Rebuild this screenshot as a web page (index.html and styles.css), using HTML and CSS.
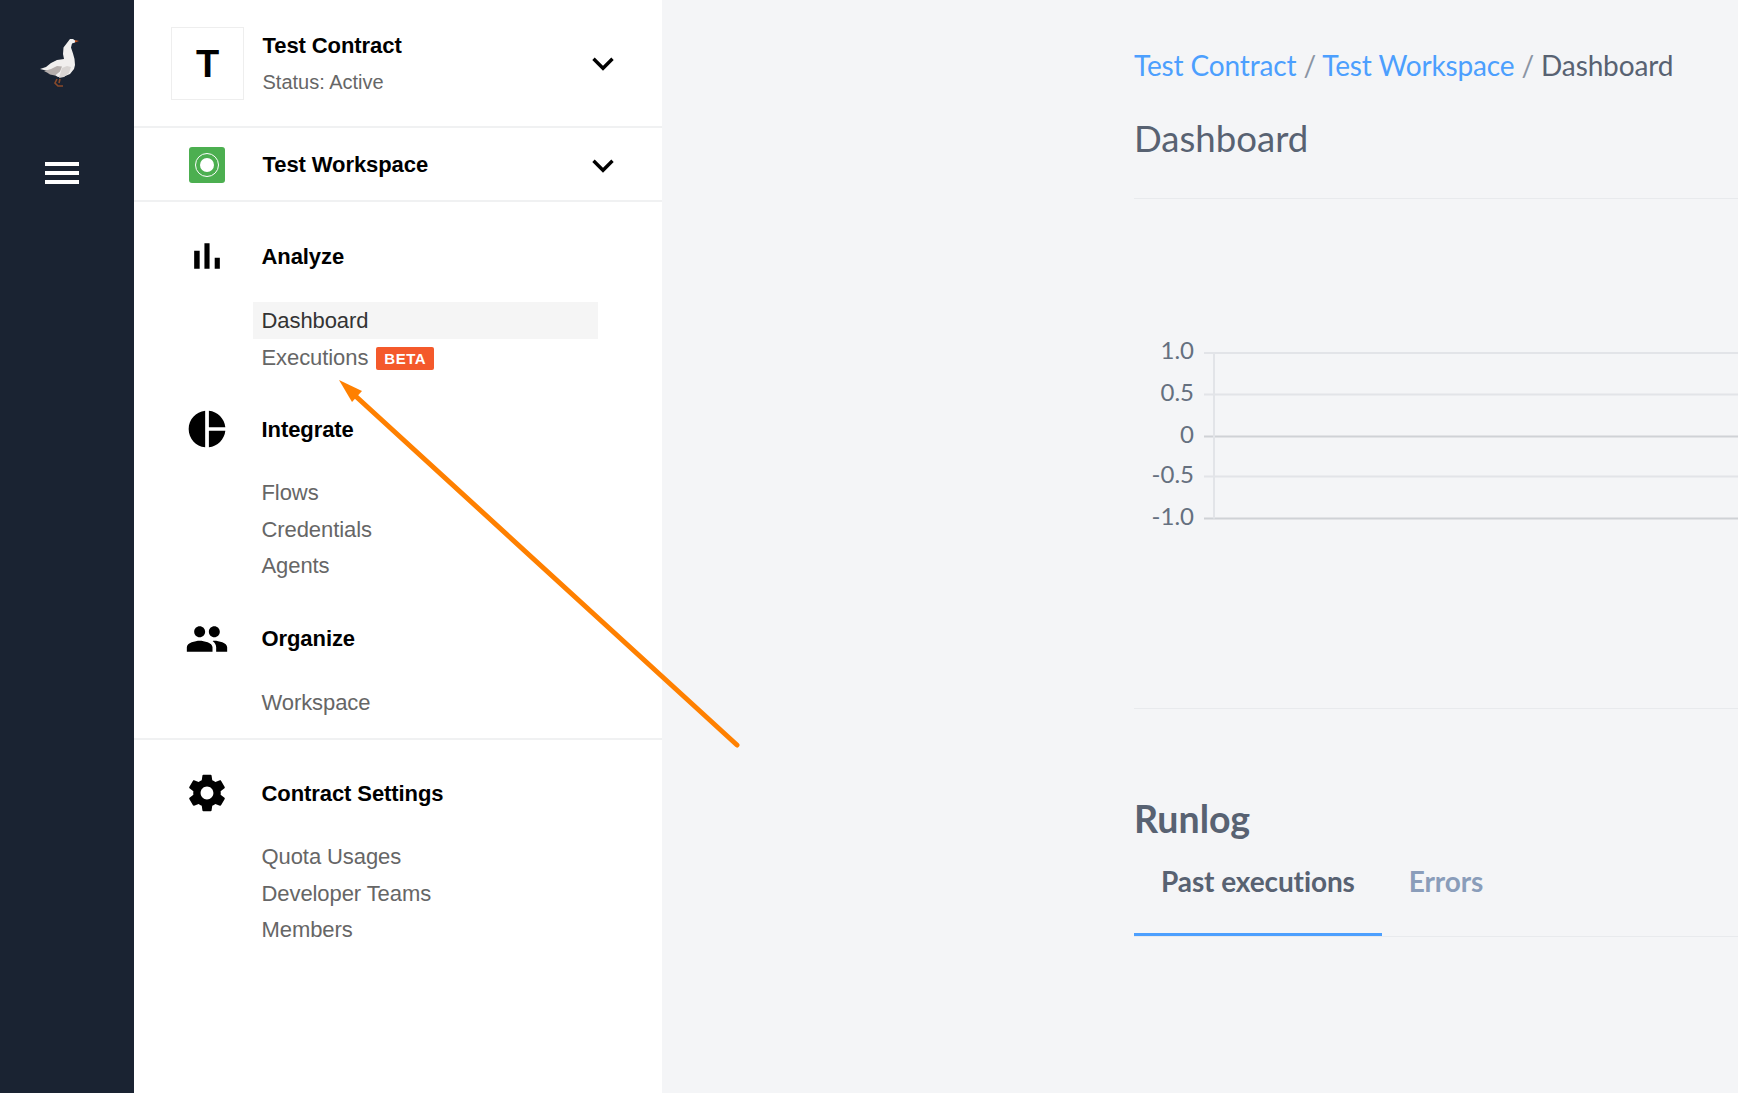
FILE: index.html
```html
<!DOCTYPE html>
<html lang="en">
<head>
    <meta charset="UTF-8">
    <title>Dashboard</title>
    <link rel="stylesheet" href="styles.css">
</head>
<body>
    <div class="rail">
        <svg class="goose" width="40" height="50" viewBox="40 38 40 50">
            <path fill="#f1efee" d="M70 39h3l2 1.500v2l-3 1-1 4 2 6 1.500 5.500.5 6-1 4-4 5-6 2.500-6 .5-5-3-5-3-8-2 6-2 5-4 6-3 7-1-1-5 .5-6.500z"/>
            <path fill="#b5aeac" d="M44 71l7-2 6-3 5 .5-2 5-5 4-5-1-3-2z"/>
            <path fill="#d9d5d3" d="M62 68l5-2 4 1-2 6-5 4-5 1z"/>
            <path fill="#c2531f" d="M75 40l4 1-4 1.500z"/>
            <path fill="none" stroke="#8a4a2a" stroke-width="1.600" d="M57 79l-2 4 3 3h5M60 79l-1 4"/>
        </svg>
        <div class="burger"><span></span><span></span><span></span></div>
    </div>

    <div class="sidebar">
        <div class="contract-row">
            <div class="contract-logo">T</div>
            <div class="contract-info">
                <div class="row-title">Test Contract</div>
                <div class="contract-status">Status: Active</div>
            </div>
            <svg class="chevron" width="22" height="14" viewBox="0 0 22 14"><path d="M1.500 1.800L11 11.300 20.500 1.800" fill="none" stroke="#000" stroke-width="3.400"/></svg>
        </div>

        <div class="workspace-row">
            <div class="workspace-icon"><span class="ring"><span class="dot"></span></span></div>
            <div class="row-title">Test Workspace</div>
            <svg class="chevron" width="22" height="14" viewBox="0 0 22 14"><path d="M1.500 1.800L11 11.300 20.500 1.800" fill="none" stroke="#000" stroke-width="3.400"/></svg>
        </div>

        <div class="nav-group">
            <div class="nav-section">
                <div class="nav-head">
                    <svg class="nav-icon" viewBox="0 0 24 24"><path d="M5 9.200h3V19H5zM10.600 5h2.800v14h-2.800zm5.600 8H19v6h-2.800z"/></svg>
                    <span>Analyze</span>
                </div>
                <div class="nav-items analyze-items">
                    <a class="nav-item active">Dashboard</a>
                    <a class="nav-item">Executions <span class="beta">BETA</span></a>
                </div>
            </div>

            <div class="nav-section">
                <div class="nav-head">
                    <svg class="nav-icon" viewBox="0 0 24 24"><path d="M11 2v20c-5.070-.5-9-4.790-9-10s3.930-9.500 9-10zm2.030 0v8.990H22c-.47-4.740-4.240-8.520-8.970-8.990zm0 11.010V22c4.740-.47 8.500-4.250 8.970-8.990h-8.970z"/></svg>
                    <span>Integrate</span>
                </div>
                <div class="nav-items">
                    <a class="nav-item">Flows</a>
                    <a class="nav-item">Credentials</a>
                    <a class="nav-item">Agents</a>
                </div>
            </div>

            <div class="nav-section">
                <div class="nav-head">
                    <svg class="nav-icon" viewBox="0 0 24 24"><path d="M16 11c1.660 0 2.990-1.340 2.990-3S17.660 5 16 5c-1.660 0-3 1.340-3 3s1.340 3 3 3zm-8 0c1.660 0 2.990-1.340 2.990-3S9.660 5 8 5C6.340 5 5 6.340 5 8s1.340 3 3 3zm0 2c-2.330 0-7 1.170-7 3.500V19h14v-2.500c0-2.330-4.670-3.500-7-3.500zm8 0c-.29 0-.62.02-.97.05 1.160.84 1.970 1.970 1.970 3.450V19h6v-2.500c0-2.330-4.670-3.500-7-3.500z"/></svg>
                    <span>Organize</span>
                </div>
                <div class="nav-items">
                    <a class="nav-item">Workspace</a>
                </div>
            </div>
        </div>

        <div class="nav-group settings">
            <div class="nav-section">
                <div class="nav-head">
                    <svg class="nav-icon" viewBox="0 0 24 24"><path d="M19.430 12.980c.04-.32.07-.64.07-.98s-.03-.66-.07-.98l2.110-1.650c.19-.15.24-.42.12-.64l-2-3.460c-.12-.22-.39-.3-.61-.22l-2.490 1c-.52-.4-1.080-.73-1.690-.98l-.38-2.650C14.460 2.180 14.250 2 14 2h-4c-.25 0-.46.18-.49.42l-.38 2.650c-.61.25-1.170.59-1.690.98l-2.490-1c-.23-.09-.49 0-.61.22l-2 3.460c-.13.22-.07.49.12.64l2.110 1.650c-.04.32-.07.65-.07.98s.03.66.07.98l-2.110 1.650c-.19.15-.24.42-.12.64l2 3.460c.12.22.39.3.61.22l2.490-1c.52.4 1.080.73 1.690.98l.38 2.650c.03.24.24.42.49.42h4c.25 0 .46-.18.49-.42l.38-2.650c.61-.25 1.170-.59 1.690-.98l2.490 1c.23.09.49 0 .61-.22l2-3.460c.12-.22.07-.49-.12-.64l-2.110-1.650zM12 15.500c-1.930 0-3.500-1.570-3.500-3.500s1.570-3.500 3.500-3.500 3.500 1.570 3.500 3.500-1.570 3.500-3.500 3.500z"/></svg>
                    <span>Contract Settings</span>
                </div>
                <div class="nav-items">
                    <a class="nav-item">Quota Usages</a>
                    <a class="nav-item">Developer Teams</a>
                    <a class="nav-item">Members</a>
                </div>
            </div>
        </div>
    </div>

    <div class="main">
        <div class="breadcrumb">
            <a>Test Contract</a> <span class="sep">/</span> <a>Test Workspace</a> <span class="sep">/</span> <span>Dashboard</span>
        </div>
        <h1 class="page-title">Dashboard</h1>

        <div class="chart">
            <svg width="604" height="509">
                <g class="grid">
                    <line x1="70" x2="604" y1="154" y2="154"/>
                    <line x1="70" x2="604" y1="195.500" y2="195.500"/>
                    <line x1="70" x2="604" y1="277.500" y2="277.500"/>
                    <line class="base" x1="70" x2="604" y1="319.500" y2="319.500"/>
                    <line class="base" x1="70" x2="604" y1="237.500" y2="237.500"/>
                    <line x1="80" x2="80" y1="154" y2="319.500"/>
                </g>
                <g class="ticks">
                    <text x="60" y="160">1.0</text>
                    <text x="60" y="202">0.5</text>
                    <text x="60" y="244">0</text>
                    <text x="60" y="284">-0.5</text>
                    <text x="60" y="326">-1.0</text>
                </g>
            </svg>
        </div>

        <h2 class="section-title">Runlog</h2>
        <div class="tabs">
            <a class="tab active">Past executions</a>
            <a class="tab">Errors</a>
        </div>
    </div>

    <!-- annotation drawn on top of the screenshot -->
    <svg class="arrow" width="1738" height="1093">
        <path d="M737 745L350 391" fill="none" stroke="#ff8000" stroke-width="5" stroke-linecap="round"/>
        <path d="M339 380L362 391 352 402z" fill="#ff8000"/>
    </svg>
</body>
</html>
```

FILE: styles.css
```css
* {
    margin: 0;
    padding: 0;
    box-sizing: border-box;
}

body {
    display: flex;
    min-height: 100vh;
    background: #f4f5f7;
    font-family: "Liberation Sans", Arial, sans-serif;
    overflow: hidden;
}

.rail {
    width: 134px;
    flex-shrink: 0;
    background: #1a2332;
    padding: 38px 0 0 40px;
}

.goose {
    display: block;
}

.burger {
    display: flex;
    flex-direction: column;
    gap: 5px;
    width: 34px;
    margin: 74px 0 0 5px;
}

.burger span {
    height: 4px;
    background: #fff;
}

.sidebar {
    width: 528px;
    flex-shrink: 0;
    background: #fff;
    height: 1093px;
}

.contract-row {
    display: flex;
    align-items: center;
    height: 128px;
    padding: 1px 48px 0 37px;
    border-bottom: 2px solid #f0f1f2;
}

.contract-logo {
    width: 73px;
    height: 73px;
    padding-top: 1px;
    border: 1px solid #eee;
    display: flex;
    align-items: center;
    justify-content: center;
    font-size: 38px;
    font-weight: bold;
    color: #000;
}

.contract-info {
    flex: 1;
    margin-left: 18.500px;
}

.row-title {
    font-size: 22px;
    font-weight: bold;
    letter-spacing: -0.08px;
    color: #000;
}

.contract-status {
    margin-top: 12px;
    font-size: 20px;
    color: #666;
}

.chevron {
    flex-shrink: 0;
    margin-top: 1px;
}

.workspace-row {
    display: flex;
    align-items: center;
    height: 74px;
    padding: 2px 48px 0 55px;
    border-bottom: 2px solid #f0f1f2;
}

.workspace-row .row-title {
    flex: 1;
}

.workspace-icon {
    width: 36px;
    height: 36px;
    margin-right: 37.500px;
    border-radius: 3px;
    background: #4caf50;
    display: flex;
    align-items: center;
    justify-content: center;
}

.ring {
    width: 24px;
    height: 24px;
    border: 1px solid #fff;
    border-radius: 50%;
    display: flex;
    align-items: center;
    justify-content: center;
}

.dot {
    width: 14px;
    height: 14px;
    border-radius: 50%;
    background: #fff;
}

.nav-group {
    padding-top: 32px;
    padding-bottom: 17px;
    border-bottom: 2px solid #f0f1f2;
}

.settings {
    padding-top: 31px;
    border-bottom: none;
}

.nav-section + .nav-section {
    margin-top: 32px;
}

.nav-head {
    display: flex;
    align-items: center;
    height: 44px;
    padding-left: 51px;
    font-size: 22px;
    font-weight: bold;
    letter-spacing: -0.08px;
    color: #000;
}

.nav-head span {
    padding-top: 1px;
}

.nav-icon {
    width: 44px;
    height: 44px;
    margin-right: 32.500px;
    flex-shrink: 0;
}

.nav-items {
    margin: 24px 64px 0 119px;
}

.nav-item {
    display: flex;
    align-items: center;
    height: 36.500px;
    padding-left: 8.500px;
    font-size: 22px;
    letter-spacing: -0.08px;
    color: #666;
}

.analyze-items .nav-item {
    padding-top: 2px;
}

.nav-item.active {
    background: #f5f5f5;
    color: #333;
}

.beta {
    margin: 1px 0 0 8px;
    padding: 0 8px;
    height: 23px;
    line-height: 23px;
    border-radius: 2px;
    background: #f4592b;
    color: #fff;
    font-size: 15px;
    font-weight: bold;
    letter-spacing: 0.5px;
}

.main {
    flex: 1;
    padding: 43px 0 0 472px;
    font-family: Lato, "Open Sans", sans-serif;
    color: #586272;
}

.breadcrumb {
    font-size: 28px;
    letter-spacing: -0.14px;
    line-height: 44px;
    white-space: nowrap;
}

.breadcrumb a {
    color: #4c9ffe;
}

.sep {
    color: #8a94a3;
}

.page-title {
    margin-top: 29px;
    padding-bottom: 37px;
    font-size: 36.600px;
    line-height: 45px;
    font-weight: 400;
    border-bottom: 1px solid #e8eaed;
}

.chart {
    height: 510px;
    border-bottom: 1px solid #e8eaed;
}

.chart svg {
    display: block;
}

.grid line {
    stroke: #e2e4e8;
    stroke-width: 2;
}

.grid line.base {
    stroke: #cfd2d6;
}

.ticks text {
    fill: #65707f;
    font-size: 24px;
    text-anchor: end;
}

.section-title {
    margin-top: 85px;
    font-size: 37.500px;
    line-height: 50px;
    font-weight: 700;
}

.tabs {
    display: flex;
    height: 93px;
    border-bottom: 1px solid #e8eaed;
}

.tab {
    padding: 17px 27px 0;
    height: 92px;
    font-size: 28px;
    letter-spacing: -0.1px;
    line-height: 40px;
    font-weight: 700;
    color: #8a9dba;
}

.tab.active {
    color: #586272;
    border-bottom: 3px solid #4c9ffe;
}

.arrow {
    position: absolute;
    top: 0;
    left: 0;
    pointer-events: none;
}
```
